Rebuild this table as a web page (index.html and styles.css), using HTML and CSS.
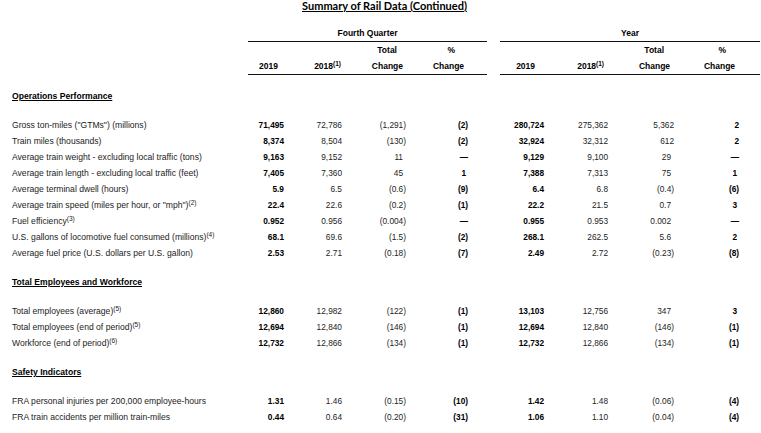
FILE: index.html
```html
<!DOCTYPE html>
<html>
<head>
<meta charset="utf-8">
<link rel="stylesheet" href="styles.css">
</head>
<body>
<div class="title"><span>Summary of Rail Data (Continued)</span></div>
<table class="data">
  <colgroup>
    <col class="c-label"><col class="c-q1"><col class="c-q2"><col class="c-q3"><col class="c-q4">
    <col class="c-gap"><col class="c-y1"><col class="c-y2"><col class="c-y3"><col class="c-y4">
  </colgroup>
  <thead>
    <tr class="h-group">
      <th></th>
      <th colspan="4" class="grp">Fourth Quarter</th>
      <th></th>
      <th colspan="4" class="grp">Year</th>
    </tr>
    <tr class="h-top">
      <th></th>
      <th></th><th></th><th class="h q3">Total</th><th class="h q4">%</th>
      <th></th>
      <th></th><th></th><th class="h y3">Total</th><th class="h y4">%</th>
    </tr>
    <tr class="h-bot">
      <th></th>
      <th class="h q1 ln">2019</th><th class="h q2 ln">2018<sup>(1)</sup></th><th class="h q3 ln">Change</th><th class="h q4 ln">Change</th>
      <th></th>
      <th class="h y1 ln">2019</th><th class="h y2 ln">2018<sup>(1)</sup></th><th class="h y3 ln">Change</th><th class="h y4 ln">Change</th>
    </tr>
  </thead>
  <tbody>
    <tr class="sp"><td colspan="10"></td></tr>
    <tr class="sec"><td colspan="10"><span>Operations Performance</span></td></tr>
    <tr class="sp"><td colspan="10"></td></tr>
    <tr><td class="lbl">Gross ton-miles ("GTMs") (millions)</td><td class="b q1">71,495</td><td class="q2">72,786</td><td class="q3">(1,291)</td><td class="b q4">(2)</td><td></td><td class="b y1">280,724</td><td class="y2">275,362</td><td class="y3">5,362</td><td class="b y4">2</td></tr>
    <tr><td class="lbl">Train miles (thousands)</td><td class="b q1">8,374</td><td class="q2">8,504</td><td class="q3">(130)</td><td class="b q4">(2)</td><td></td><td class="b y1">32,924</td><td class="y2">32,312</td><td class="y3">612</td><td class="b y4">2</td></tr>
    <tr><td class="lbl">Average train weight - excluding local traffic (tons)</td><td class="b q1">9,163</td><td class="q2">9,152</td><td class="q3 np">11</td><td class="b q4">—</td><td></td><td class="b y1">9,129</td><td class="y2">9,100</td><td class="y3 np">29</td><td class="b y4">—</td></tr>
    <tr><td class="lbl">Average train length - excluding local traffic (feet)</td><td class="b q1">7,405</td><td class="q2">7,360</td><td class="q3 np">45</td><td class="b q4 np">1</td><td></td><td class="b y1">7,388</td><td class="y2">7,313</td><td class="y3 np">75</td><td class="b y4 np">1</td></tr>
    <tr><td class="lbl">Average terminal dwell (hours)</td><td class="b q1">5.9</td><td class="q2">6.5</td><td class="q3">(0.6)</td><td class="b q4">(9)</td><td></td><td class="b y1">6.4</td><td class="y2">6.8</td><td class="y3">(0.4)</td><td class="b y4">(6)</td></tr>
    <tr><td class="lbl">Average train speed (miles per hour, or "mph")<sup>(2)</sup></td><td class="b q1">22.4</td><td class="q2">22.6</td><td class="q3">(0.2)</td><td class="b q4">(1)</td><td></td><td class="b y1">22.2</td><td class="y2">21.5</td><td class="y3 np">0.7</td><td class="b y4 np">3</td></tr>
    <tr><td class="lbl">Fuel efficiency<sup>(3)</sup></td><td class="b q1">0.952</td><td class="q2">0.956</td><td class="q3">(0.004)</td><td class="b q4">—</td><td></td><td class="b y1">0.955</td><td class="y2">0.953</td><td class="y3 np">0.002</td><td class="b y4">—</td></tr>
    <tr><td class="lbl">U.S. gallons of locomotive fuel consumed (millions)<sup>(4)</sup></td><td class="b q1">68.1</td><td class="q2">69.6</td><td class="q3">(1.5)</td><td class="b q4">(2)</td><td></td><td class="b y1">268.1</td><td class="y2">262.5</td><td class="y3 np">5.6</td><td class="b y4 np">2</td></tr>
    <tr><td class="lbl">Average fuel price (U.S. dollars per U.S. gallon)</td><td class="b q1">2.53</td><td class="q2">2.71</td><td class="q3">(0.18)</td><td class="b q4">(7)</td><td></td><td class="b y1">2.49</td><td class="y2">2.72</td><td class="y3">(0.23)</td><td class="b y4">(8)</td></tr>
    <tr class="sp"><td colspan="10"></td></tr>
    <tr class="sec"><td colspan="10"><span>Total Employees and Workforce</span></td></tr>
    <tr class="sp"><td colspan="10"></td></tr>
    <tr><td class="lbl">Total employees (average)<sup>(5)</sup></td><td class="b q1">12,860</td><td class="q2">12,982</td><td class="q3">(122)</td><td class="b q4">(1)</td><td></td><td class="b y1">13,103</td><td class="y2">12,756</td><td class="y3 np">347</td><td class="b y4 np">3</td></tr>
    <tr><td class="lbl">Total employees (end of period)<sup>(5)</sup></td><td class="b q1">12,694</td><td class="q2">12,840</td><td class="q3">(146)</td><td class="b q4">(1)</td><td></td><td class="b y1">12,694</td><td class="y2">12,840</td><td class="y3">(146)</td><td class="b y4">(1)</td></tr>
    <tr><td class="lbl">Workforce (end of period)<sup>(6)</sup></td><td class="b q1">12,732</td><td class="q2">12,866</td><td class="q3">(134)</td><td class="b q4">(1)</td><td></td><td class="b y1">12,732</td><td class="y2">12,866</td><td class="y3">(134)</td><td class="b y4">(1)</td></tr>
    <tr class="sp"><td colspan="10"></td></tr>
    <tr class="sec"><td colspan="10"><span>Safety Indicators</span></td></tr>
    <tr class="sp"><td colspan="10"></td></tr>
    <tr><td class="lbl">FRA personal injuries per 200,000 employee-hours</td><td class="b q1">1.31</td><td class="q2">1.46</td><td class="q3">(0.15)</td><td class="b q4">(10)</td><td></td><td class="b y1">1.42</td><td class="y2">1.48</td><td class="y3">(0.06)</td><td class="b y4">(4)</td></tr>
    <tr><td class="lbl">FRA train accidents per million train-miles</td><td class="b q1">0.44</td><td class="q2">0.64</td><td class="q3">(0.20)</td><td class="b q4">(31)</td><td></td><td class="b y1">1.06</td><td class="y2">1.10</td><td class="y3">(0.04)</td><td class="b y4">(4)</td></tr>
  </tbody>
</table>
</body>
</html>
```

FILE: styles.css
```css
html, body {
  margin: 0;
  padding: 0;
  background: #ffffff;
}
body {
  font-family: "Liberation Sans", Arial, sans-serif;
  font-size: 8.3px;
  color: #1c1c1c;
}
.title {
  height: 25px;
  text-align: center;
  padding-left: 8px;
}
.title span {
  display: inline-block;
  font-family: Lato, "Liberation Sans", sans-serif;
  font-weight: 700;
  font-size: 11px;
  line-height: 12px;
  color: #000;
  text-decoration: underline;
  text-underline-offset: 1px;
}
.data {
  border-collapse: separate;
  border-spacing: 0;
  table-layout: fixed;
  width: 760px;
}
.c-label { width: 248px; }
.c-q1 { width: 42px; }
.c-q2 { width: 60px; }
.c-q3 { width: 62px; }
.c-q4 { width: 75px; }
.c-gap { width: 13px; }
.c-y1 { width: 50px; }
.c-y2 { width: 64px; }
.c-y3 { width: 66px; }
.c-y4 { width: 80px; }

th, td {
  padding: 0;
  white-space: nowrap;
}
th {
  font-weight: 700;
  font-size: 8.5px;
  color: #000;
  text-align: right;
}
.h-group th {
  height: 16px;
  line-height: 16px;
}
.h-group .grp {
  text-align: center;
  border-bottom: 1px solid #111;
}
.h-top th, .h-bot th {
  height: 16px;
  line-height: 16px;
}
.h-bot .ln { border-bottom: 1px solid #111; }
.h-bot th.h, .h-top th.h { text-align: right; }
.h.q1 { padding-right: 12px; }
.h.q2 { padding-right: 9px; }
.h.q3 { padding-right: 9px; }
.h.q4 { padding-right: 23px; }
.h.y1 { padding-right: 15px; }
.h.y2 { padding-right: 10px; }
.h.y3 { padding-right: 10px; }
.h.y4 { padding-right: 25px; }
.h-top .h.q3 { padding-right: 15px; }
.h-top .h.y3 { padding-right: 16px; }
.h-top .h.q4 { padding-right: 32px; }
.h-top .h.y4 { padding-right: 34px; }

tbody td {
  height: 16px;
  line-height: 16px;
  text-align: right;
}
tbody td.lbl {
  text-align: left;
  padding-left: 12px;
  font-size: 8.6px;
}
tr.sp td { height: 13px; line-height: 13px; }
tr.sec td {
  text-align: left;
  padding-left: 12px;
  font-weight: 700;
  font-size: 8.6px;
  color: #000;
}
tr.sec span {
  text-decoration: underline;
  text-underline-offset: 1px;
}
.b { font-weight: 700; color: #000; }
td.q1 { padding-right: 6px; }
td.q2 { padding-right: 8px; }
td.q3 { padding-right: 6px; }
td.q4 { padding-right: 19px; }
td.y1 { padding-right: 6px; }
td.y2 { padding-right: 6px; }
td.y3 { padding-right: 6px; }
td.y4 { padding-right: 21px; }
td.q3.np { padding-right: 9px; }
td.y3.np { padding-right: 9px; }
td.q4.np { padding-right: 21px; }
td.y4.np { padding-right: 23px; }
sup {
  font-size: 6.5px;
  line-height: 0;
  vertical-align: 3px;
}
```
